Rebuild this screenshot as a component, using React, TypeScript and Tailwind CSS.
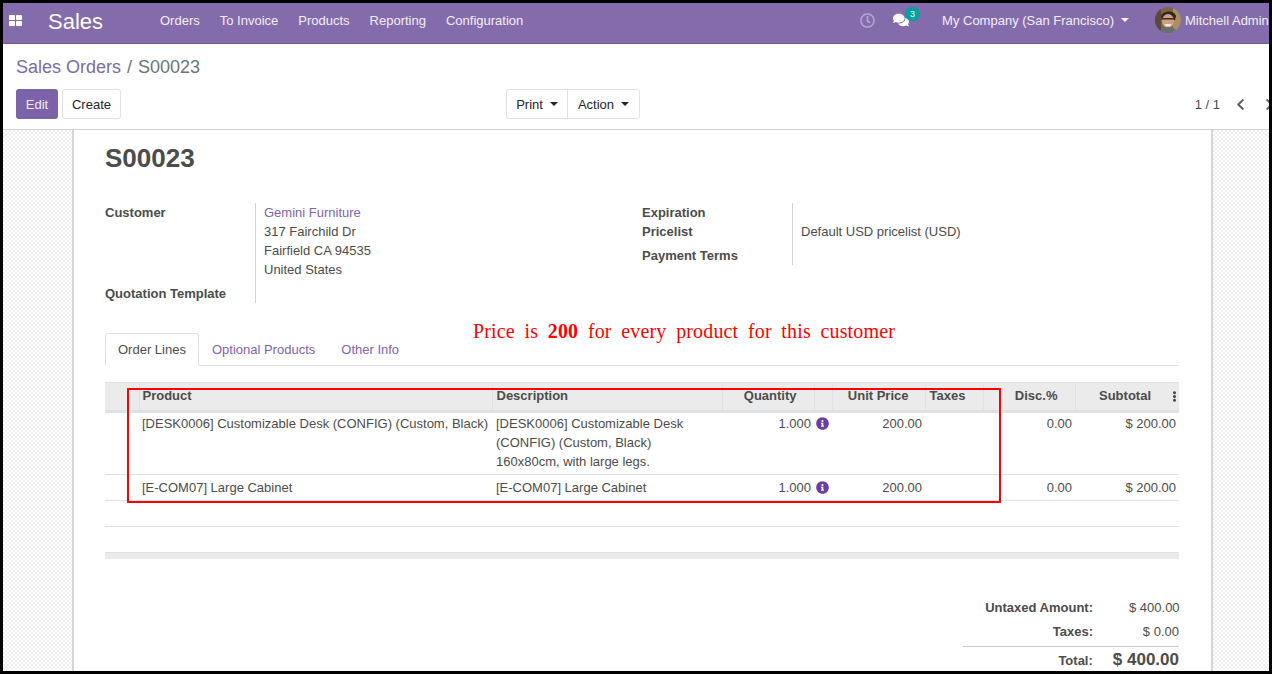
import React from 'react';
import { FaComments, FaRegClock, FaInfoCircle, FaChevronLeft, FaChevronRight, FaEllipsisV } from 'react-icons/fa';

const menus = ['Orders', 'To Invoice', 'Products', 'Reporting', 'Configuration'];

const Caret = () => (
  <span className="inline-block w-0 h-0 border-x-[4px] border-x-transparent border-t-[4px] border-t-current" />
);

const Avatar = () => (
  <svg viewBox="0 0 26 26" className="w-[26px] h-[26px] rounded-full shrink-0">
    <rect width="26" height="26" fill="#7d6448" />
    <rect x="18" width="8" height="26" fill="#a98f66" />
    <rect width="6" height="26" fill="#5a4a3a" />
    <path d="M6 10c0-6 13-8 15-1l-1 4H7z" fill="#33241c" />
    <ellipse cx="13" cy="14" rx="6" ry="7" fill="#cf9f84" />
    <path d="M7 11h12v1.6H7z" fill="#3b2c25" />
    <path d="M9.5 17h7l-1.5 2.5h-4z" fill="#f0e6dc" />
    <path d="M4 26c1-5 5-6 9-6s8 1 9 6z" fill="#6a6c70" />
  </svg>
);

const HeadCell = ({ children, className = '' }: { children?: React.ReactNode; className?: string }) => (
  <th className={`border-l border-[#dee2e6] px-[3px] font-bold align-top pt-[3px] ${className}`}>{children}</th>
);

const InfoIcon = () => <FaInfoCircle className="text-[#6b3fa0] text-[13px] ml-[2px] mt-[3px]" />;

const lines = [
  {
    product: '[DESK0006] Customizable Desk (CONFIG) (Custom, Black)',
    desc: ['[DESK0006] Customizable Desk', '(CONFIG) (Custom, Black)', '160x80cm, with large legs.'],
    h: 'h-[63px]',
    pt: 'pt-[1px]',
  },
  { product: '[E-COM07] Large Cabinet', desc: ['[E-COM07] Large Cabinet'], h: 'h-[26px]', pt: 'pt-[3px]' },
];

export default function App() {
  return (
    <div className="relative w-[1272px] h-[674px] overflow-hidden border-[3px] border-black bg-white text-[13px] leading-[19px] text-[#4c4c4c] font-['Liberation_Sans',Arial,sans-serif] flex flex-col">
      <nav className="h-[41px] shrink-0 bg-[#846cac] border-b border-[#6f5a95] flex items-center pb-[6px] text-white">
        <svg viewBox="0 0 12 12" className="w-[13px] h-[13px] ml-[6px] fill-white">
          <rect x="0" y="1" width="5.5" height="4.5" rx="0.6" />
          <rect x="6.5" y="1" width="5.5" height="4.5" rx="0.6" />
          <rect x="0" y="6.5" width="5.5" height="4.5" rx="0.6" />
          <rect x="6.5" y="6.5" width="5.5" height="4.5" rx="0.6" />
        </svg>
        <span className="ml-[26px] text-[22px] w-[56px] mt-[2px]">Sales</span>
        <div className="ml-[56px] flex gap-[20px] text-[#f2eef7]">
          {menus.map((m) => (
            <span key={m}>{m}</span>
          ))}
        </div>
        <div className="ml-auto flex items-center whitespace-nowrap">
          <FaRegClock className="text-[15px] text-[#b9abd2] mr-[18px]" />
          <span className="relative mr-[33px] -mt-[1px]">
            <FaComments className="text-[16px]" />
            <span className="absolute -top-[5px] left-[12px] w-[15px] h-[14px] rounded-full bg-[#00a09d] text-[9px] leading-[14px] text-center">3</span>
          </span>
          <span className="mr-[7px] text-[#f2eef7]">My Company (San Francisco)</span>
          <Caret />
          <span className="ml-[26px] mr-[4px]"><Avatar /></span>
          <span className="text-[#f2eef7] w-[84px] overflow-hidden">Mitchell Admin</span>
        </div>
      </nav>

      <header className="h-[86px] shrink-0 border-b border-[#ced4da] relative px-[13px] pt-[10px]">
        <div className="text-[18px] leading-[27px]">
          <span className="text-[#7c6ba8]">Sales Orders</span>
          <span className="text-[#6c757d] ml-[6px]">/</span>
          <span className="text-[#6c757d] ml-[6px]">S00023</span>
        </div>
        <div className="mt-[8px] flex items-start">
          <button className="w-[42px] h-[30px] rounded-[3px] bg-[#7c62a8] text-[#f0ecf6]">Edit</button>
          <button className="ml-[4px] w-[59px] h-[30px] rounded-[3px] border border-[#dee2e6] text-[#212529]">Create</button>
          <div className="ml-[385px] h-[30px] flex rounded-[3px] border border-[#dee2e6] text-[#212529]">
            <span className="w-[61px] flex items-center justify-center gap-[7px] border-r border-[#dee2e6]">Print <Caret /></span>
            <span className="w-[71px] flex items-center justify-center gap-[7px]">Action <Caret /></span>
          </div>
          <div className="ml-auto h-[30px] flex items-center">
            <span className="mr-[14px]">1 / 1</span>
            <FaChevronLeft className="text-[13px] text-[#5f5f5f]" />
            <FaChevronRight className="text-[13px] text-[#5f5f5f] ml-[16px] -mr-[20px]" />
          </div>
        </div>
      </header>

      <main className="flex-1 min-h-0 overflow-hidden bg-[repeating-conic-gradient(#f0f0f0_0%_25%,#ffffff_0%_50%)] bg-[length:4px_4px]">
        <div className="ml-[69px] w-[1141px] h-full bg-white border-x-[2px] border-[#d6d6d6] pl-[31px] pr-[32px] pt-[13px]">
          <h1 className="text-[26px] leading-[31px] font-bold">S00023</h1>

          <div className="mt-[29px] flex h-[100px]">
            <div className="w-[150px] flex flex-col font-bold">
              <span>Customer</span>
              <span className="mt-[62px]">Quotation Template</span>
            </div>
            <div className="w-[387px] border-l border-[#ced4da] pl-[8px]">
              <div className="text-[#8064b0]">Gemini Furniture</div>
              <div>317 Fairchild Dr</div>
              <div>Fairfield CA 94535</div>
              <div>United States</div>
            </div>
            <div className="w-[150px] flex flex-col font-bold">
              <span>Expiration</span>
              <span>Pricelist</span>
              <span className="mt-[5px]">Payment Terms</span>
            </div>
            <div className="border-l border-[#ced4da] pl-[8px] h-[62px]">
              <div className="h-[19px]" />
              <div>Default USD pricelist (USD)</div>
            </div>
          </div>

          <div className="mt-[30px] h-[33px] flex border-b border-[#dee2e6]">
            <span className="h-[33px] px-[12px] pt-[6px] border border-[#dee2e6] border-b-white rounded-t-[3px] bg-white">Order Lines</span>
            <span className="px-[13px] pt-[7px] text-[#8064b0]">Optional Products</span>
            <span className="px-[13px] pt-[7px] text-[#8064b0]">Other Info</span>
          </div>

          <table className="mt-[16px] w-[1074px] table-fixed border-collapse">
            <colgroup>
              <col className="w-[34px]" />
              <col className="w-[353px]" />
              <col className="w-[230px]" />
              <col className="w-[92px]" />
              <col className="w-[18px]" />
              <col className="w-[93px]" />
              <col className="w-[58px]" />
              <col className="w-[92px]" />
              <col className="w-[104px]" />
            </colgroup>
            <thead>
              <tr className="h-[29px] bg-[#ebebeb] border-t border-[#dee2e6] border-b-[3px] border-b-[#dee2e6]">
                <th />
                <HeadCell className="text-left">Product</HeadCell>
                <HeadCell className="text-left pl-[4px]">Description</HeadCell>
                <HeadCell className="text-right pr-[17px]">Quantity</HeadCell>
                <HeadCell />
                <HeadCell className="text-right pr-[16px]">Unit Price</HeadCell>
                <HeadCell className="text-left pl-[4px]">Taxes</HeadCell>
                <HeadCell className="text-right pr-[17px]">Disc.%</HeadCell>
                <HeadCell className="text-right pr-[28px] relative">
                  Subtotal
                  <FaEllipsisV className="absolute -right-[1px] top-[8px] text-[11px] text-[#4c4c4c]" />
                </HeadCell>
              </tr>
            </thead>
            <tbody>
              {lines.map((l) => (
                <tr key={l.product} className={`${l.h} border-b border-[#dee2e6] align-top`}>
                  <td />
                  <td className={`px-[3px] ${l.pt} whitespace-nowrap`}>{l.product}</td>
                  <td className={`pl-[4px] ${l.pt}`}>
                    {l.desc.map((d) => (
                      <div key={d}>{d}</div>
                    ))}
                  </td>
                  <td className={`px-[3px] ${l.pt} text-right`}>1.000</td>
                  <td className={l.pt}><InfoIcon /></td>
                  <td className={`px-[3px] ${l.pt} text-right`}>200.00</td>
                  <td />
                  <td className={`px-[3px] ${l.pt} text-right`}>0.00</td>
                  <td className={`pr-[3px] ${l.pt} text-right`}>$ 200.00</td>
                </tr>
              ))}
              <tr className="h-[26px] border-b border-[#dee2e6]">
                <td colSpan={9} />
              </tr>
            </tbody>
          </table>

          <div className="mt-[25px] h-[7px] w-[1074px] bg-[#ebebeb] border-t border-[#dee2e6]" />

          <div className="mt-[39px] w-[1074px] flex justify-end">
            <div className="w-[216px]">
              <div className="flex justify-end h-[24px]">
                <span className="font-bold mr-[36px]">Untaxed Amount:</span>
                <span className="w-[50px] text-right whitespace-nowrap">$ 400.00</span>
              </div>
              <div className="flex justify-end h-[24px] pb-[4px]">
                <span className="font-bold mr-[36px]">Taxes:</span>
                <span className="w-[50px] text-right">$ 0.00</span>
              </div>
              <div className="flex justify-end items-start border-t border-[#c8c8d0] h-[24px] pt-[3px]">
                <span className="font-bold mr-[20px] mt-[1px]">Total:</span>
                <span className="text-[17px] font-bold whitespace-nowrap">$ 400.00</span>
              </div>
            </div>
          </div>
        </div>
      </main>

      {/* annotation drawn over the screenshot */}
      <div className="absolute left-[470px] top-[315px] text-[20px] leading-[26px] text-[#ff0000] tracking-[0.15px] [word-spacing:4.5px] font-['Liberation_Serif',serif] whitespace-nowrap">
        Price is <span className="font-bold">200</span> for every product for this customer
      </div>
      <div className="absolute left-[124px] top-[385px] w-[874px] h-[115px] border-[2px] border-[#ff0000]" />
    </div>
  );
}
